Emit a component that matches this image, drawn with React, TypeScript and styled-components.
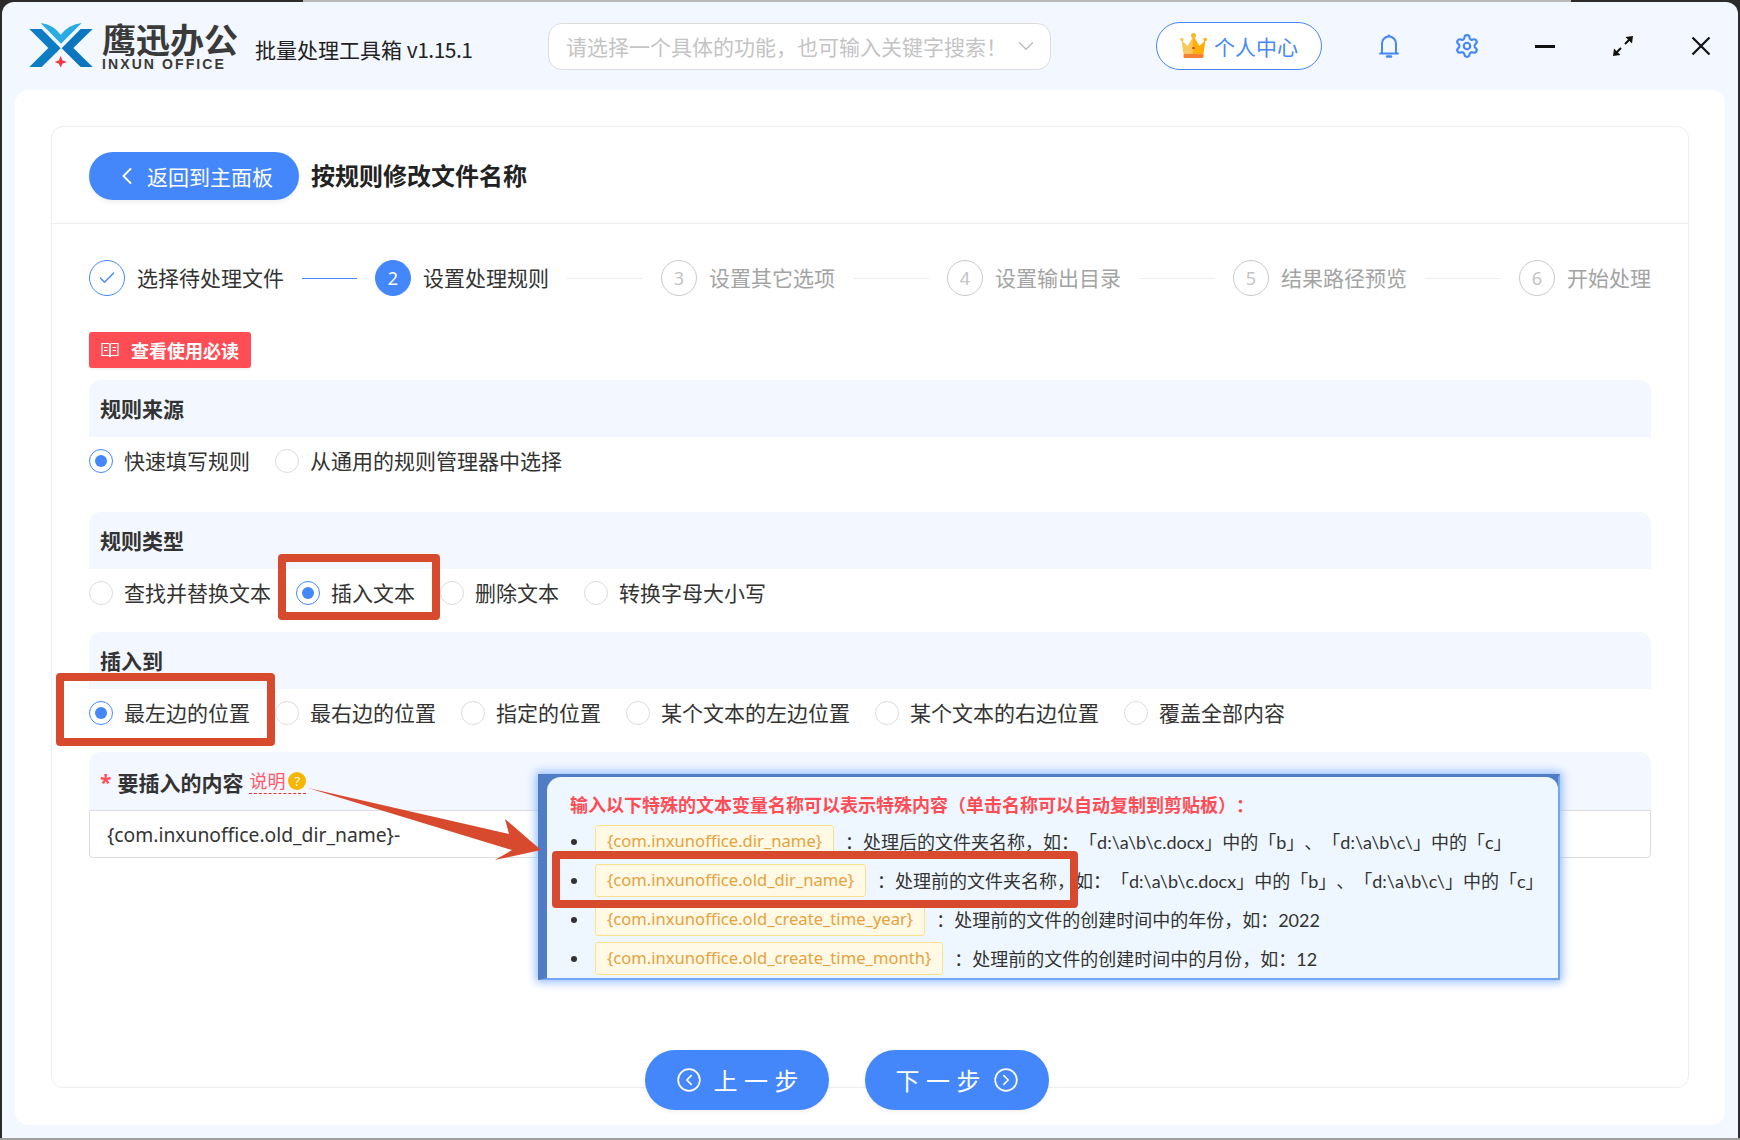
import React, { FC } from 'react';
import styled, { createGlobalStyle } from 'styled-components';
import { ChevronDown, ChevronLeft, Check, CircleChevronLeft, CircleChevronRight, Settings } from 'lucide-react';

const GlobalStyle = createGlobalStyle`
  html, body { margin: 0; padding: 0; }
  body {
    font-family: "Noto Sans", "Noto Sans CJK SC", sans-serif;
    color: #333;
    text-spacing-trim: space-all;
  }
  * { box-sizing: border-box; }
`;

const BLUE = '#4487fa';
const RED = '#ff4d55';
const MARK = '#d84a2e';

const Page = styled.div`
  position: relative;
  width: 1740px;
  height: 1140px;
  padding: 2px;
  overflow: hidden;
  background:
    linear-gradient(90deg, #2b2b2b 303px, #b9b9b9 303px, #b9b9b9 1571px, #2b2b2b 1571px) top / 100% 2px no-repeat,
    linear-gradient(#9e9e9e, #9e9e9e) bottom / 100% 2px no-repeat,
    #2b2b2b;
`;

const Win = styled.div`
  height: 1136px;
  background: #f3f7ff;
  border-radius: 12px 12px 0 0;
  display: flex;
  flex-direction: column;
`;

const TopBar = styled.header`
  height: 88px;
  flex: none;
  display: flex;
  align-items: center;
  padding-left: 27px;
`;

const LogoBox = styled.div`
  display: flex;
  align-items: flex-start;
  gap: 9px;
`;

const LogoText = styled.div`
  display: flex;
  flex-direction: column;
  margin-top: 1px;
`;

const LogoCn = styled.div`
  font-size: 34px;
  line-height: 36px;
  font-weight: 700;
  color: #3a3a3a;
  font-family: "Liberation Sans", "Noto Sans CJK SC", sans-serif;
`;

const LogoEn = styled.div`
  font-size: 14px;
  line-height: 14px;
  font-weight: 700;
  letter-spacing: 2.1px;
  color: #3a3a3a;
  margin-top: -2px;
  font-family: "Liberation Sans", sans-serif;
`;

const AppName = styled.div`
  margin: 6px 0 0 17px;
  width: 216px;
  font-size: 21px;
  line-height: 28px;
  color: #222;
  white-space: nowrap;
  font-family: "Noto Sans CJK SC", sans-serif;
`;

const Version = styled.span`
  letter-spacing: -0.5px;
`;

const SearchBox = styled.div`
  margin-left: 77px;
  width: 503px;
  height: 47px;
  border: 1px solid #dcdcdc;
  border-radius: 14px;
  background: #fff;
  display: flex;
  align-items: center;
  justify-content: space-between;
  padding: 0 11px 0 17px;
  color: #c4c4c4;
  font-size: 21px;
  white-space: nowrap;
`;

const VipButton = styled.div`
  margin-left: 105px;
  width: 166px;
  height: 48px;
  border: 1px solid ${BLUE};
  border-radius: 24px;
  background: #fff;
  display: flex;
  align-items: center;
  padding-left: 23px;
  gap: 7px;
  color: ${BLUE};
  font-size: 21px;
`;

const WinIcons = styled.div`
  margin-left: 47px;
  display: flex;
  gap: 38px;
`;

const WinIcon = styled.div`
  width: 40px;
  height: 40px;
  display: flex;
  align-items: center;
  justify-content: center;
`;

const Panel = styled.main`
  flex: 1;
  margin: 0 13px 13px;
  padding: 36px 36px 0 36px;
  background: #fff;
  border-radius: 14px;
`;

const Card = styled.section`
  height: 962px;
  border: 1px solid #eeeeee;
  border-radius: 12px;
`;

const CardHead = styled.div`
  height: 97px;
  padding: 2px 0 0 37px;
  border-bottom: 1px solid #eeeeee;
  display: flex;
  align-items: center;
  gap: 12px;
`;

const BackButton = styled.button`
  width: 210px;
  height: 48px;
  border: 0;
  border-radius: 24px;
  background: ${BLUE};
  color: #fff;
  font: inherit;
  font-size: 21px;
  display: flex;
  align-items: center;
  gap: 6px;
  padding: 0 0 0 24px;
  box-shadow: 0 3px 5px rgba(0, 0, 0, 0.06);
`;

const PageTitle = styled.h1`
  margin: 0;
  font-size: 24px;
  line-height: 32px;
  font-weight: 700;
  color: #222;
`;

const CardBody = styled.div`
  padding: 36px 37px 0 37px;
`;

const Steps = styled.div`
  display: flex;
  height: 36px;
`;

const StepItem = styled.div<{ $last: boolean }>`
  flex: ${({ $last }) => ($last ? 'none' : '1')};
  display: flex;
  align-items: center;
  padding-right: ${({ $last }) => ($last ? '0' : '18px')};
`;

const StepCircle = styled.div<{ $state: string }>`
  width: 36px;
  height: 36px;
  flex: none;
  border-radius: 50%;
  border: 1px solid ${({ $state }) => ($state === 'todo' ? '#c9c9c9' : BLUE)};
  background: ${({ $state }) => ($state === 'active' ? BLUE : '#fff')};
  color: ${({ $state }) => ($state === 'active' ? '#fff' : '#c4c4c4')};
  display: flex;
  align-items: center;
  justify-content: center;
  font-size: 18px;
`;

const StepLabel = styled.div<{ $state: string }>`
  margin: -2px 0 0 12px;
  font-size: 21px;
  white-space: nowrap;
  color: ${({ $state }) => ($state === 'todo' ? '#a3a3a3' : '#333')};
`;

const StepLine = styled.div<{ $state: string }>`
  flex: 1;
  height: 1px;
  margin-left: 18px;
  background: ${({ $state }) => ($state === 'done' ? BLUE : '#eeeeee')};
`;

const NoticeButton = styled.div`
  margin-top: 36px;
  width: 162px;
  height: 36px;
  border-radius: 3px;
  background: ${RED};
  color: #fff;
  display: flex;
  align-items: center;
  padding-left: 12px;
  gap: 12px;
  font-size: 18px;
  font-weight: 700;
  box-shadow: 0 2px 3px rgba(0, 0, 0, 0.05);
`;

const SectionHead = styled.div<{ $tall?: boolean; $first?: boolean }>`
  height: ${({ $tall }) => ($tall ? '58px' : '57px')};
  margin-top: ${({ $first }) => ($first ? '12px' : '0')};
  padding: ${({ $tall }) => ($tall ? '1px 0 0 11px' : '0 0 2px 11px')};
  background: #f3f7ff;
  border-radius: 12px 12px 0 0;
  display: flex;
  align-items: center;
  font-size: 21px;
  font-weight: 700;
  color: #333;
`;

const RadioRow = styled.div<{ $gap: number }>`
  height: 24px;
  margin: 12px 0 ${({ $gap }) => $gap}px;
  display: flex;
  gap: 25px;
`;

const RadioItem = styled.label`
  display: flex;
  align-items: center;
  gap: 11px;
  font-size: 21px;
  white-space: nowrap;
  color: #333;
`;

const RadioText = styled.span`
  margin-top: -2px;
`;

const RadioDot = styled.span<{ $on: boolean }>`
  width: 24px;
  height: 24px;
  border-radius: 50%;
  border: 1px solid ${({ $on }) => ($on ? BLUE : '#dcdcdc')};
  background: #fff;
  display: flex;
  align-items: center;
  justify-content: center;
  &::after {
    content: '';
    width: 12px;
    height: 12px;
    border-radius: 50%;
    background: ${({ $on }) => ($on ? BLUE : 'transparent')};
  }
`;

const Required = styled.span`
  color: ${RED};
  margin-right: 6px;
`;

const HelpLink = styled.span`
  margin-left: 6px;
  font-size: 18px;
  line-height: 24px;
  font-weight: 400;
  color: #ff5a6a;
  border-bottom: 1px dashed #e8303a;
  display: flex;
  align-items: center;
  gap: 3px;
`;

const HelpMark = styled.span`
  width: 18px;
  height: 18px;
  border-radius: 50%;
  background: #f7b500;
  color: #fff;
  font-size: 13px;
  line-height: 18px;
  text-align: center;
`;

const TextBox = styled.input`
  display: block;
  width: 100%;
  height: 48px;
  padding: 0 17px;
  border: 1px solid #dcdcdc;
  border-radius: 0 0 4px 4px;
  outline: 0;
  font: inherit;
  font-size: 19.3px;
  color: #333;
`;

const Footer = styled.div`
  margin-top: -38px;
  padding-right: 46px;
  display: flex;
  justify-content: center;
  gap: 36px;
`;

const StepButton = styled.button`
  position: relative;
  width: 184px;
  height: 60px;
  border: 0;
  border-radius: 30px;
  background: ${BLUE};
  color: #fff;
  font: inherit;
  display: flex;
  align-items: center;
  justify-content: center;
  gap: 12px;
  box-shadow: 0 2px 4px rgba(0, 0, 0, 0.06);
`;

const StepButtonText = styled.span`
  font-size: 24px;
  letter-spacing: 6.5px;
  margin: -2px -6.5px 0 0;
`;

const Popover = styled.aside`
  position: absolute;
  left: 538px;
  top: 774px;
  width: 1022px;
  height: 206px;
  background: #4f7cc4;
  border-style: solid;
  border-color: #4f7cc4 #74a6f5 #74a6f5 #4f7cc4;
  border-width: 3px 2px 2px 9px;
  box-shadow: 0 0 9px 2px #8fbafc;
`;

const PopoverInner = styled.div`
  height: 100%;
  padding: 16px 0 0 23px;
  background: #eef7ff;
  border-radius: 14px 12px 0 0;
  overflow: hidden;
`;

const PopoverTitle = styled.div`
  font-size: 18px;
  line-height: 24px;
  font-weight: 700;
  color: ${RED};
  white-space: nowrap;
`;

const VarList = styled.ul`
  list-style: none;
  margin: 5px 0 0;
  padding: 0;
`;

const VarRow = styled.li`
  height: 39px;
  display: flex;
  align-items: center;
  font-size: 18px;
  color: #333;
  white-space: nowrap;
  &::before {
    content: '';
    width: 6px;
    height: 6px;
    margin: 0 18px 0 1px;
    border-radius: 50%;
    background: #333;
  }
`;

const VarTag = styled.span`
  height: 33px;
  padding: 0 11px;
  margin-right: 11px;
  border: 1px solid #fde08a;
  border-radius: 3px;
  background: #fff9e6;
  color: #e6a23c;
  font-size: 16.6px;
  line-height: 30px;
`;

const VarDesc = styled.span`
  margin-top: -2px;
  font-family: Lato, "Noto Sans CJK SC", sans-serif;
`;

const MarkBox = styled.div<{ $x: number; $y: number; $w: number; $h: number }>`
  position: absolute;
  left: ${({ $x }) => $x}px;
  top: ${({ $y }) => $y}px;
  width: ${({ $w }) => $w}px;
  height: ${({ $h }) => $h}px;
  border: 8px solid ${MARK};
  border-radius: 4px;
`;

const MarkArrow = styled.svg`
  position: absolute;
  left: 0;
  top: 0;
  width: 1740px;
  height: 1140px;
  pointer-events: none;
`;

const Logo = () => (
  <svg width="64" height="44" viewBox="28 20 190 132" style={{ marginTop: 1 }}>
    <path d="M62 20 Q100 25 122 55 Q146 25 185 20 L123 82 Z" fill="#2aabe2" />
    <path d="M28 38 H65 L122 96 L65 152 H28 L85 95 Z" fill="#0e7cc3" />
    <path d="M218 38 H182 L125 96 L182 152 H218 L160 95 Z" fill="#0b76bd" />
    <path d="M122 118 L127 132 L141 137 L127 142 L122 154 L117 142 L104 137 L117 132 Z" fill="#ee3a43" />
  </svg>
);

const Crown = () => (
  <svg width="27" height="26" viewBox="0 0 27 26">
    <defs>
      <linearGradient id="crownFill" x1="0" x2="1" y1="0" y2="0">
        <stop offset="0.45" stopColor="#fcc75c" />
        <stop offset="0.5" stopColor="#ffae0a" />
      </linearGradient>
    </defs>
    <path d="M1.5 7 L7.5 13 L13.5 3 L19.5 13 L25.5 7 L23.5 21 H3.5 Z" fill="url(#crownFill)" />
    <circle cx="1.8" cy="6.5" r="1.8" fill="#fcc75c" />
    <circle cx="13.5" cy="2.5" r="2.5" fill="#fbb52c" />
    <circle cx="25.2" cy="6.5" r="1.8" fill="#ffae0a" />
    <rect x="3.5" y="21" width="20" height="4" rx="1" fill="#f97f32" />
    <rect x="12.3" y="14" width="2.4" height="2" fill="#d8412a" />
  </svg>
);

const Bell = () => (
  <svg width="22" height="26" viewBox="0 0 22 26" fill="none" stroke={BLUE} strokeWidth="2" strokeLinejoin="round">
    <path d="M4 20 V10.5 A7 7 0 0 1 18 10.5 V20" />
    <path d="M2 20.5 H20" strokeLinecap="round" />
    <circle cx="11" cy="2.6" r="1.2" fill={BLUE} stroke="none" />
    <path d="M9 23.5 H13" strokeLinecap="round" strokeWidth="2.4" />
  </svg>
);

const Expand = () => (
  <svg width="20" height="20" viewBox="0 0 20 20">
    <path d="M3.5 16.5 L8 12 M12 8 L16.5 3.5" stroke="#111" strokeWidth="2" />
    <path d="M0 20 L1 12.5 L7.5 19 Z M20 0 L19 7.5 L12.5 1 Z" fill="#111" />
  </svg>
);

const CloseX = () => (
  <svg width="20" height="20" viewBox="0 0 20 20" stroke="#111" strokeWidth="2.2">
    <path d="M1.5 1.5 L18.5 18.5 M18.5 1.5 L1.5 18.5" />
  </svg>
);

const BookIcon = () => (
  <svg width="18" height="16" viewBox="0 0 18 16" fill="none" stroke="#fff" strokeWidth="1.2">
    <path d="M1 1.5 H7 Q9 1.5 9 3.5 V15 Q9 13.5 7 13.5 H1 Z" />
    <path d="M17 1.5 H11 Q9 1.5 9 3.5 V15 Q9 13.5 11 13.5 H17 Z" />
    <path d="M3 5.5 H6.5 M3 8.5 H6.5 M11.5 5.5 H15 M11.5 8.5 H15" />
  </svg>
);

const steps = [
  { label: '选择待处理文件', state: 'done' },
  { label: '设置处理规则', state: 'active' },
  { label: '设置其它选项', state: 'todo' },
  { label: '设置输出目录', state: 'todo' },
  { label: '结果路径预览', state: 'todo' },
  { label: '开始处理', state: 'todo' },
];

interface RadioProps {
  label: string;
  on?: boolean;
}

const Radio: FC<RadioProps> = ({ label, on = false }) => (
  <RadioItem>
    <RadioDot $on={on} />
    <RadioText>{label}</RadioText>
  </RadioItem>
);

const variables = [
  { name: '{com.inxunoffice.dir_name}', desc: '：处理后的文件夹名称，如：「d:\\a\\b\\c.docx」中的「b」、「d:\\a\\b\\c\\」中的「c」' },
  { name: '{com.inxunoffice.old_dir_name}', desc: '：处理前的文件夹名称，如：「d:\\a\\b\\c.docx」中的「b」、「d:\\a\\b\\c\\」中的「c」' },
  { name: '{com.inxunoffice.old_create_time_year}', desc: '：处理前的文件的创建时间中的年份，如：2022' },
  { name: '{com.inxunoffice.old_create_time_month}', desc: '：处理前的文件的创建时间中的月份，如：12' },
];

const App = () => (
  <Page>
    <GlobalStyle />
    <Win>
      <TopBar>
        <LogoBox>
          <Logo />
          <LogoText>
            <LogoCn>鹰迅办公</LogoCn>
            <LogoEn>INXUN OFFICE</LogoEn>
          </LogoText>
        </LogoBox>
        <AppName>批量处理工具箱 <Version>v1.15.1</Version></AppName>
        <SearchBox>
          请选择一个具体的功能，也可输入关键字搜索！
          <ChevronDown size={26} color="#bdbdbd" strokeWidth={1.4} />
        </SearchBox>
        <VipButton>
          <Crown />
          个人中心
        </VipButton>
        <WinIcons>
          <WinIcon><Bell /></WinIcon>
          <WinIcon><Settings size={26} color={BLUE} strokeWidth={2} /></WinIcon>
          <WinIcon><svg width="20" height="3"><rect width="20" height="3" fill="#111" /></svg></WinIcon>
          <WinIcon><Expand /></WinIcon>
          <WinIcon><CloseX /></WinIcon>
        </WinIcons>
      </TopBar>

      <Panel>
        <Card>
          <CardHead>
            <BackButton>
              <ChevronLeft size={28} strokeWidth={1.6} />
              返回到主面板
            </BackButton>
            <PageTitle>按规则修改文件名称</PageTitle>
          </CardHead>
          <CardBody>
            <Steps>
              {steps.map((step, i) => {
                const last = i === steps.length - 1;
                return (
                  <StepItem key={step.label} $last={last}>
                    <StepCircle $state={step.state}>
                      {step.state === 'done' ? <Check size={20} color={BLUE} strokeWidth={1.6} /> : i + 1}
                    </StepCircle>
                    <StepLabel $state={step.state}>{step.label}</StepLabel>
                    {!last && <StepLine $state={step.state} />}
                  </StepItem>
                );
              })}
            </Steps>

            <NoticeButton>
              <BookIcon />
              查看使用必读
            </NoticeButton>

            <SectionHead $first>规则来源</SectionHead>
            <RadioRow $gap={39}>
              <Radio label="快速填写规则" on />
              <Radio label="从通用的规则管理器中选择" />
            </RadioRow>

            <SectionHead>规则类型</SectionHead>
            <RadioRow $gap={27}>
              <Radio label="查找并替换文本" />
              <Radio label="插入文本" on />
              <Radio label="删除文本" />
              <Radio label="转换字母大小写" />
            </RadioRow>

            <SectionHead>插入到</SectionHead>
            <RadioRow $gap={27}>
              <Radio label="最左边的位置" on />
              <Radio label="最右边的位置" />
              <Radio label="指定的位置" />
              <Radio label="某个文本的左边位置" />
              <Radio label="某个文本的右边位置" />
              <Radio label="覆盖全部内容" />
            </RadioRow>

            <SectionHead $tall>
              <Required>*</Required>
              要插入的内容
              <HelpLink>
                说明
                <HelpMark>?</HelpMark>
              </HelpLink>
            </SectionHead>
            <TextBox readOnly defaultValue="{com.inxunoffice.old_dir_name}-" />
          </CardBody>
        </Card>

        <Footer>
          <StepButton>
            <CircleChevronLeft size={26} strokeWidth={1.6} />
            <StepButtonText>上一步</StepButtonText>
          </StepButton>
          <StepButton>
            <StepButtonText>下一步</StepButtonText>
            <CircleChevronRight size={26} strokeWidth={1.6} />
          </StepButton>
        </Footer>
      </Panel>
    </Win>

    <Popover>
      <PopoverInner>
        <PopoverTitle>输入以下特殊的文本变量名称可以表示特殊内容（单击名称可以自动复制到剪贴板）：</PopoverTitle>
        <VarList>
          {variables.map((v) => (
            <VarRow key={v.name}>
              <VarTag>{v.name}</VarTag>
              <VarDesc>{v.desc}</VarDesc>
            </VarRow>
          ))}
        </VarList>
      </PopoverInner>
    </Popover>

    <MarkBox $x={278} $y={554} $w={162} $h={66} />
    <MarkBox $x={56} $y={673} $w={219} $h={73} />
    <MarkBox $x={552} $y={851} $w={526} $h={57} />
    <MarkArrow viewBox="0 0 1740 1140">
      <polygon points="308,788 509,834 505,819 541,850 495,860 512,850" fill={MARK} />
    </MarkArrow>
  </Page>
);

export default App;
